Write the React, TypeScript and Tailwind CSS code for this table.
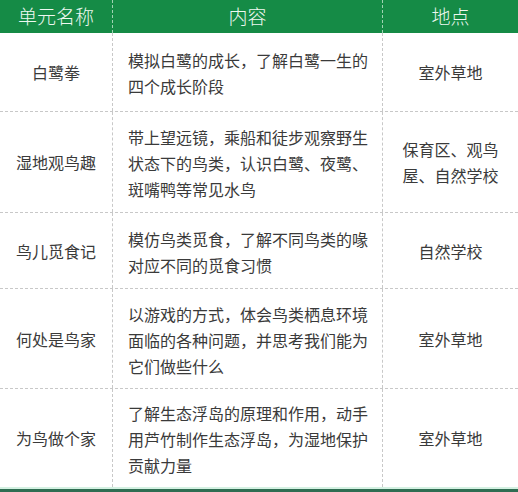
import React from 'react';

const rows = [
  { name: '白鹭拳', content: ['模拟白鹭的成长，了解白鹭一生的', '四个成长阶段'], place: ['室外草地'], h: 'h-[79px]' },
  { name: '湿地观鸟趣', content: ['带上望远镜，乘船和徒步观察野生', '状态下的鸟类，认识白鹭、夜鹭、', '斑嘴鸭等常见水鸟'], place: ['保育区、观鸟', '屋、自然学校'], h: 'h-[101px]' },
  { name: '鸟儿觅食记', content: ['模仿鸟类觅食，了解不同鸟类的喙', '对应不同的觅食习惯'], place: ['自然学校'], h: 'h-[76px]' },
  { name: '何处是鸟家', content: ['以游戏的方式，体会鸟类栖息环境', '面临的各种问题，并思考我们能为', '它们做些什么'], place: ['室外草地'], h: 'h-[100px]' },
  { name: '为鸟做个家', content: ['了解生态浮岛的原理和作用，动手', '用芦竹制作生态浮岛，为湿地保护', '贡献力量'], place: ['室外草地'], h: 'h-[98px]' },
];

const App: React.FC = () => {
  return (
    <div className="w-[518px] h-[492px] bg-white overflow-hidden" style={{ fontFamily: '"Noto Sans CJK SC", "Noto Sans", sans-serif' }}>
      <div className="grid grid-cols-[113px_270px_1fr] h-[33px] bg-[#158b46] text-[#eef8f1] text-[19px] font-light">
        <div className="flex items-center justify-center border-r border-dashed border-[#9fd3b2]">单元名称</div>
        <div className="flex items-center justify-center border-r border-dashed border-[#9fd3b2]">内容</div>
        <div className="flex items-center justify-center">地点</div>
      </div>

      {rows.map((row, i) => (
        <div
          key={row.name}
          className={`grid grid-cols-[113px_270px_1fr] ${row.h} text-[16px] leading-[26px] text-[#3a3a3a] ${i < rows.length - 1 ? 'border-b border-dashed border-[#c8c8c8]' : ''}`}
        >
          <div className="flex items-center justify-center border-r border-dashed border-[#c8c8c8]">{row.name}</div>
          <div className="flex flex-col justify-center pl-[15px] pt-[2px] border-r border-dashed border-[#c8c8c8]">
            {row.content.map(line => (
              <span key={line} className="whitespace-nowrap">{line}</span>
            ))}
          </div>
          <div className="flex flex-col items-center justify-center">
            {row.place.map(line => (
              <span key={line} className="whitespace-nowrap">{line}</span>
            ))}
          </div>
        </div>
      ))}

      <div className="h-[2px] bg-[#d4f1e2]" />
      <div className="h-[3px] bg-[#2f6d52]" />
    </div>
  );
};

export default App;
